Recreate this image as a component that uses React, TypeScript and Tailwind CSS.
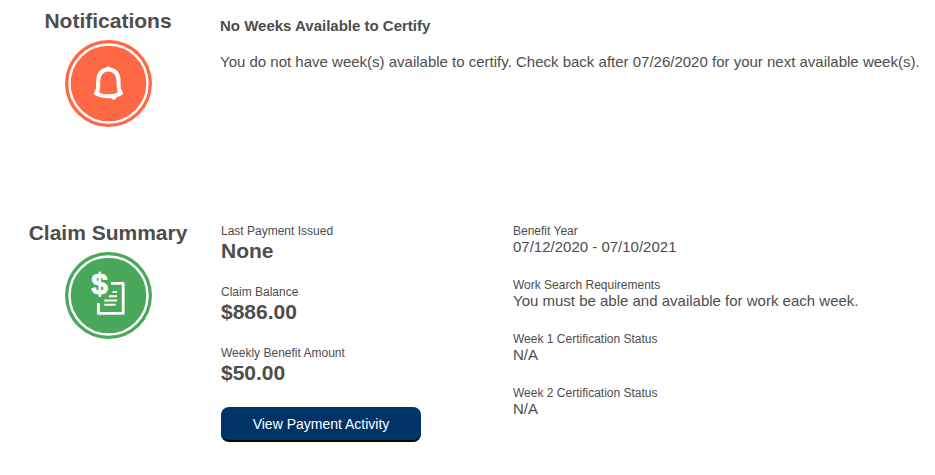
import React from 'react';

interface Item {
  label: string;
  value: string;
}

interface SectionProps {
  title: string;
  icon: React.ReactNode;
  children: React.ReactNode;
}

const payments: Item[] = [
  { label: 'Last Payment Issued', value: 'None' },
  { label: 'Claim Balance', value: '$886.00' },
  { label: 'Weekly Benefit Amount', value: '$50.00' },
];

const details: Item[] = [
  { label: 'Benefit Year', value: '07/12/2020 - 07/10/2021' },
  { label: 'Work Search Requirements', value: 'You must be able and available for work each week.' },
  { label: 'Week 1 Certification Status', value: 'N/A' },
  { label: 'Week 2 Certification Status', value: 'N/A' },
];

const BellIcon: React.FC = () => (
  <svg className="w-[87px] h-[87px]" viewBox="0 0 87 87" fill="none" aria-hidden="true">
    <circle cx="43.5" cy="43.5" r="43.5" fill="#ff6844" />
    <circle cx="43.5" cy="43.5" r="39" stroke="#fff" strokeWidth="2.4" />
    <g stroke="#fff" strokeWidth="4" strokeLinecap="round" strokeLinejoin="round">
      <path d="M31 53.2 C33.2 50.6 33.2 49.5 33.2 46 V41.5 C33.2 34.5 36.6 29.8 43.4 29.2 C50.2 29.8 53.6 34.5 53.6 41.5 V46 C53.6 49.5 53.8 50.6 55.8 53.2" />
      <path d="M31 53.2 C38 57.2 49 57.2 55.8 53.2" />
    </g>
    <circle cx="43.4" cy="28.8" r="2.4" fill="#fff" />
    <path d="M45 56.5 L52 56 C51.2 58.6 50.2 59.6 48.8 59.8 C47.4 59.8 46 58.6 45 56.5Z" fill="#fff" />
  </svg>
);

const InvoiceIcon: React.FC = () => (
  <svg className="w-[87px] h-[87px]" viewBox="0 0 87 87" fill="none" aria-hidden="true">
    <circle cx="43.5" cy="43.5" r="43.5" fill="#49a85c" />
    <circle cx="43.5" cy="43.5" r="39" stroke="#fff" strokeWidth="2.4" />
    <path d="M46 31.4 H58.2 V61.4 H33.4 V51" stroke="#fff" strokeWidth="2.8" strokeLinejoin="round" />
    <path d="M47.5 40 H52 M43.8 44.2 H52 M39.3 48.4 H52 M39.3 52.8 H50.6" stroke="#fff" strokeWidth="2" />
    <text x="34.5" y="42" textAnchor="middle" fill="#fff" stroke="#fff" strokeWidth="0.7" fontSize="30" fontWeight="bold">
      $
    </text>
  </svg>
);

const Section: React.FC<SectionProps> = ({ title, icon, children }) => (
  <section className="flex gap-1">
    <div className="w-54 shrink-0 flex flex-col items-center gap-1.5">
      <h2 className="text-[21px] leading-[26px] font-bold">{title}</h2>
      {icon}
    </div>
    <div className="flex-1 min-w-0">{children}</div>
  </section>
);

const App: React.FC = () => {
  return (
    <main className="flex flex-col gap-[93px] pt-2 pb-8 bg-white text-[#4d4d4d] font-['Liberation_Sans',Arial,sans-serif]">
      <Section title="Notifications" icon={<BellIcon />}>
        <div className="flex flex-col gap-4 pt-2 text-[15px] leading-5">
          <h3 className="font-bold">No Weeks Available to Certify</h3>
          <p>You do not have week(s) available to certify. Check back after 07/26/2020 for your next available week(s).</p>
        </div>
      </Section>

      <Section title="Claim Summary" icon={<InvoiceIcon />}>
        <div className="flex pl-px pt-[3px]">
          <div className="w-[292px] shrink-0">
            <dl className="flex flex-col gap-[21px]">
              {payments.map((item) => (
                <div key={item.label}>
                  <dt className="text-xs">{item.label}</dt>
                  <dd className="text-[21px] leading-6 font-bold">{item.value}</dd>
                </div>
              ))}
            </dl>
            <button
              type="button"
              className="mt-[22px] w-[200px] h-[35px] rounded-lg bg-[#003366] border-b-2 border-black text-sm text-white cursor-pointer"
            >
              View Payment Activity
            </button>
          </div>
          <dl className="flex-1 min-w-0 flex flex-col gap-[23px]">
            {details.map((item) => (
              <div key={item.label}>
                <dt className="text-xs">{item.label}</dt>
                <dd className="text-[15px] leading-[15px]">{item.value}</dd>
              </div>
            ))}
          </dl>
        </div>
      </Section>
    </main>
  );
};

export default App;
